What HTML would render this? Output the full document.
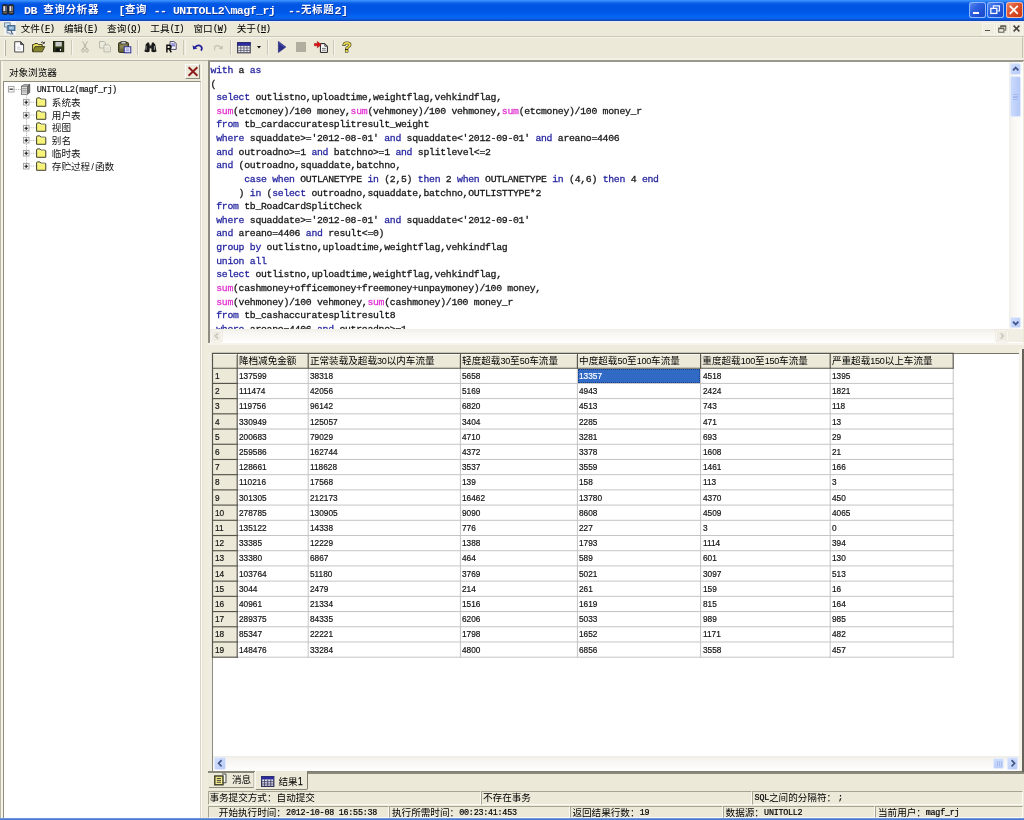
<!DOCTYPE html><html><head><meta charset="utf-8"><title>DB</title><style>*{margin:0;padding:0;box-sizing:border-box}
html,body{width:1024px;height:820px;overflow:hidden;background:#ece9d8}
body{position:relative;font-family:"Liberation Sans","Noto Sans CJK SC",sans-serif;font-size:9.6px;color:#000}
.a{position:absolute;white-space:nowrap;overflow:hidden}
.t{position:absolute;white-space:nowrap;line-height:1}
svg{position:absolute;overflow:visible}
.sql{position:absolute;white-space:pre;font-family:"Liberation Mono",monospace;font-size:9.8px;letter-spacing:-0.28px;line-height:13.6px;height:13.6px;color:#161616;left:210.6px;-webkit-text-stroke:.28px}
.k{color:#2626a0}.f{color:#e030d0}
.cell{position:absolute;white-space:nowrap;font-size:9.2px;line-height:1;color:#111;transform:scaleX(.9);transform-origin:0 0;-webkit-text-stroke:.2px}
.hd{position:absolute;white-space:nowrap;font-size:9.6px;line-height:1;color:#000}
.mn{position:absolute;white-space:nowrap;font-size:9.6px;line-height:1;color:#000}
.mn u{text-decoration:underline;text-underline-offset:1px}
.st{position:absolute;white-space:nowrap;font-size:9.6px;line-height:1;color:#000}
.m{font-family:"Liberation Mono",monospace;font-size:8.4px;letter-spacing:-0.24px;-webkit-text-stroke:.2px}
.tb{font-family:"Liberation Mono",monospace;font-weight:bold;font-size:11.6px;letter-spacing:-.56px;color:#fff;text-shadow:.6px .6px 0 #0b2f96}
.tc{font-family:"Liberation Sans","Noto Sans CJK SC",sans-serif;font-weight:bold;font-size:10.4px;letter-spacing:.8px;color:#fff;text-shadow:.6px .6px 0 #0b2f96}
.ml{font-family:"Liberation Mono",monospace;font-size:8.6px;letter-spacing:-.36px;-webkit-text-stroke:.15px}
.hd span{font-size:9.1px;letter-spacing:-.26px}
#w{position:absolute;left:0;top:0;width:1024px;height:820px;overflow:hidden;will-change:transform}
</style></head><body>
<div id="w">
<div class="a" style="left:0.00px;top:0.00px;width:1024.00px;height:20.80px;background:linear-gradient(#3d96ff 0,#2c80f6 7%,#0b5fe9 14%,#0056e3 24%,#0055e4 48%,#0059ea 62%,#0566f3 78%,#0664f0 86%,#0a55d8 93%,#153f9f 100%)"></div>
<div class="t tb" style="left:24.10px;top:4.70px;">DB</div>
<div class="t tc" style="left:43.30px;top:5.10px;">查询分析器</div>
<div class="t tb" style="left:105.70px;top:4.70px;">- [</div>
<div class="t tc" style="left:124.90px;top:5.10px;">查询</div>
<div class="t tb" style="left:153.70px;top:4.70px;">-- UNITOLL2\magf_rj&nbsp; --</div>
<div class="t tc" style="left:300.90px;top:5.10px;">无标题</div>
<div class="t tb" style="left:334.50px;top:4.70px;">2]</div>
<div class="a" style="left:0.00px;top:20.80px;width:1024.00px;height:16.40px;background:linear-gradient(#efe9d9,#ebe9d8 60%,#ece9d8)"></div>
<div class="a" style="left:0.00px;top:20.80px;width:1024.00px;height:1.20px;background:#e6ecf8"></div>
<div class="a" style="left:0.00px;top:36.30px;width:1024.00px;height:1.00px;background:#cbc8b9"></div>
<div class="mn" style="left:20.70px;top:23.90px;">文件</div>
<div class="mn ml" style="left:40.10px;top:24.60px;">(<u>F</u>)</div>
<div class="mn" style="left:63.90px;top:23.90px;">编辑</div>
<div class="mn ml" style="left:83.30px;top:24.60px;">(<u>E</u>)</div>
<div class="mn" style="left:107.10px;top:23.90px;">查询</div>
<div class="mn ml" style="left:126.50px;top:24.60px;">(<u>Q</u>)</div>
<div class="mn" style="left:150.30px;top:23.90px;">工具</div>
<div class="mn ml" style="left:169.70px;top:24.60px;">(<u>T</u>)</div>
<div class="mn" style="left:193.50px;top:23.90px;">窗口</div>
<div class="mn ml" style="left:212.90px;top:24.60px;">(<u>W</u>)</div>
<div class="mn" style="left:236.70px;top:23.90px;">关于</div>
<div class="mn ml" style="left:256.10px;top:24.60px;">(<u>H</u>)</div>
<svg style="left:1.8px;top:3.8px;width:12.2px;height:11px" viewBox="0 0 12.4 12.4" preserveAspectRatio="none"><rect x=".4" y=".6" width="5.4" height="11.2" rx="1.4" fill="#34343a" stroke="#14141c" stroke-width=".7"/><rect x="6.6" y=".6" width="5.4" height="11.2" rx="1.4" fill="#34343a" stroke="#14141c" stroke-width=".7"/><rect x="1.3" y="2.4" width="1.8" height="5.6" fill="#e0e0e0"/><rect x="7.6" y="2.4" width="1.8" height="5.6" fill="#e0e0e0"/><rect x="3.5" y="2.4" width="1.3" height="5.6" fill="#8a8a8a"/><rect x="9.8" y="2.4" width="1.3" height="5.6" fill="#8a8a8a"/><rect x="1.2" y="8.8" width="3.8" height="1.6" fill="#6a675c"/><rect x="7.4" y="8.8" width="3.8" height="1.6" fill="#6a675c"/></svg>
<div class="a" style="left:969.00px;top:1.60px;width:16.60px;height:16.80px;background:linear-gradient(135deg,#5d8cf0 0,#2f63e0 35%,#2152d3 70%,#1d47c4 100%);border:1px solid rgba(150,190,255,.95);border-radius:2.8px"></div>
<div class="a" style="left:987.40px;top:1.60px;width:16.40px;height:16.80px;background:linear-gradient(135deg,#5d8cf0 0,#2f63e0 35%,#2152d3 70%,#1d47c4 100%);border:1px solid rgba(150,190,255,.95);border-radius:2.8px"></div>
<div class="a" style="left:1005.80px;top:1.60px;width:16.80px;height:16.80px;background:linear-gradient(135deg,#e8866a 0,#dd5a35 35%,#d5431c 70%,#c63a14 100%);border:1px solid rgba(250,205,190,.85);border-radius:2.8px"></div>
<div class="a" style="left:973.20px;top:12.20px;width:6.00px;height:2.20px;background:#fdfdff"></div>
<svg style="left:990.40px;top:5.00px;width:10.6px;height:9.6px" viewBox="0 0 10.6 9.6"><path d="M3.4 3 V.9 H9.4 V6 H7.4" stroke="#f2f6ff" stroke-width="1.15" fill="none"/><rect x=".8" y="3.4" width="6" height="5" stroke="#f8faff" stroke-width="1.3" fill="none"/></svg>
<svg style="left:1009.40px;top:5.20px;width:9.6px;height:9.6px" viewBox="0 0 9.6 9.6"><path d="M.8 .8 L8.8 8.8 M8.8 .8 L.8 8.8" stroke="#fff" stroke-width="1.8" fill="none"/></svg>
<div class="a" style="left:3.60px;top:21.40px;width:12.60px;height:14.00px;background:#f4f4f4"></div>
<svg style="left:4.00px;top:22.00px;width:12px;height:13px" viewBox="0 0 12 13"><rect x=".6" y=".8" width="5.6" height="4.2" fill="#cfe0ee" stroke="#5a7a98" stroke-width=".8"/><rect x="3.8" y="3.4" width="7.2" height="5.2" fill="#5b86ad" stroke="#3a5a7a" stroke-width=".8"/><rect x="5" y="4.6" width="4.8" height="2.8" fill="#a9c8e4"/><path d="M3 5 V11 H6 M7.4 8.8 V11.6 M5.6 12 H9.4" stroke="#5a7a98" stroke-width=".8" fill="none"/><path d="M7 9 L8.6 12" stroke="#2a3a5a" stroke-width=".8"/></svg>
<div class="a" style="left:982.40px;top:22.60px;width:12.20px;height:12.00px;background:#efede0;border:.8px solid #f6f5ee"></div>
<div class="a" style="left:996.40px;top:22.60px;width:12.20px;height:12.00px;background:#efede0;border:.8px solid #f6f5ee"></div>
<div class="a" style="left:1010.60px;top:22.60px;width:12.20px;height:12.00px;background:#efede0;border:.8px solid #f6f5ee"></div>
<div class="a" style="left:985.00px;top:29.50px;width:4.80px;height:1.50px;background:#55534a"></div>
<svg style="left:998.00px;top:24.60px;width:9px;height:8.4px" viewBox="0 0 9 8.4"><path d="M2.6 2.6 V.9 H7.8 V5.2 H6" stroke="#5d5b51" stroke-width="1" fill="none"/><path d="M2.4 1.2 H8" stroke="#5d5b51" stroke-width="1.3"/><rect x=".7" y="3.2" width="5.2" height="4" stroke="#5d5b51" stroke-width="1" fill="none"/><path d="M.7 3.5 H5.9" stroke="#5d5b51" stroke-width="1.4"/></svg>
<svg style="left:1013.40px;top:25.20px;width:7px;height:7px" viewBox="0 0 7 7"><path d="M.6 .6 L6.4 6.4 M6.4 .6 L.6 6.4" stroke="#3e3d36" stroke-width="1.5" fill="none"/></svg>
<div class="a" style="left:0.00px;top:37.20px;width:1022.60px;height:22.40px;background:#ece9d8;border-top:1px solid #f6f4ea;border-right:1.2px solid #c4c1b0"></div>
<div class="a" style="left:0.00px;top:57.60px;width:1022.60px;height:2.00px;background:#f3f1e6"></div>
<div class="a" style="left:0.00px;top:59.60px;width:1024.00px;height:1.30px;background:#bcb9a9"></div>
<div class="a" style="left:4.00px;top:40.40px;width:1.60px;height:15.60px;border-left:.8px solid #fbfaf4;border-right:.9px solid #b4b1a0"></div>
<div class="a" style="left:70.70px;top:40.20px;width:1.10px;height:14.40px;background:#cbc8b8"></div>
<div class="a" style="left:71.80px;top:40.20px;width:0.90px;height:14.40px;background:#f6f5ee"></div>
<div class="a" style="left:137.00px;top:40.20px;width:1.10px;height:14.40px;background:#cbc8b8"></div>
<div class="a" style="left:138.10px;top:40.20px;width:0.90px;height:14.40px;background:#f6f5ee"></div>
<div class="a" style="left:183.40px;top:40.20px;width:1.10px;height:14.40px;background:#cbc8b8"></div>
<div class="a" style="left:184.50px;top:40.20px;width:0.90px;height:14.40px;background:#f6f5ee"></div>
<div class="a" style="left:229.80px;top:40.20px;width:1.10px;height:14.40px;background:#cbc8b8"></div>
<div class="a" style="left:230.90px;top:40.20px;width:0.90px;height:14.40px;background:#f6f5ee"></div>
<div class="a" style="left:266.60px;top:40.20px;width:1.10px;height:14.40px;background:#cbc8b8"></div>
<div class="a" style="left:267.70px;top:40.20px;width:0.90px;height:14.40px;background:#f6f5ee"></div>
<div class="a" style="left:333.20px;top:40.20px;width:1.10px;height:14.40px;background:#cbc8b8"></div>
<div class="a" style="left:334.30px;top:40.20px;width:0.90px;height:14.40px;background:#f6f5ee"></div>
<svg style="left:14.00px;top:41.20px;width:10.4px;height:11.8px" viewBox="0 0 10.4 11.8"><path d="M.7 .7 H6.6 L9.6 3.6 V11 H.7 Z" fill="#fcfcfc" stroke="#4a4a4a" stroke-width="1"/><path d="M6.6 .7 V3.6 H9.6 Z" fill="#5a5a5a" stroke="#3a3a3a" stroke-width=".8"/><path d="M3.2 6.2 H6 M3.2 8 H6.6" stroke="#b5b5c8" stroke-width=".7"/></svg>
<svg style="left:32.00px;top:41.00px;width:13.4px;height:11.6px" viewBox="0 0 13.4 11.6"><path d="M9 1.6 Q10.6 .2 12 1.8 M12.6 .8 L12.2 2.6 L10.6 2.2" stroke="#333" stroke-width=".9" fill="none"/><path d="M.6 10.8 V3.6 H2 L2.8 2.6 H5.6 L6.4 3.6 H10.2 V5.4" fill="#ece45e" stroke="#33331a" stroke-width="1"/><path d="M.6 10.8 L3 5.6 H12.8 L10.2 10.8 Z" fill="#86862c" stroke="#3b3b1e" stroke-width=".9"/></svg>
<svg style="left:53.00px;top:41.20px;width:11.2px;height:11.2px" viewBox="0 0 11.2 11.2"><rect x=".5" y=".5" width="10.2" height="10.2" fill="#2e3a16" stroke="#1c2010" stroke-width="1"/><rect x="2.4" y=".9" width="6.4" height="4.6" fill="#c9c9c9"/><rect x="2.6" y="7.2" width="6" height="3.4" fill="#111"/><rect x="6.9" y="7.8" width="1.2" height="2.2" fill="#ddd"/></svg>
<svg style="left:80.60px;top:41.20px;width:8px;height:11.8px" viewBox="0 0 8 11.8"><path d="M1.6 .4 L5.6 7.8 M6.4 .4 L2.4 7.8" stroke="#b1ae9e" stroke-width="1" fill="none"/><ellipse cx="2" cy="9.4" rx="1.2" ry="1.9" fill="none" stroke="#b1ae9e" stroke-width=".9"/><ellipse cx="6" cy="9.4" rx="1.2" ry="1.9" fill="none" stroke="#b1ae9e" stroke-width=".9"/></svg>
<svg style="left:99.00px;top:41.40px;width:12px;height:11.4px" viewBox="0 0 12 11.4"><path d="M.5 .5 H5 L6.6 2 V7 H.5 Z" fill="#ecebe0" stroke="#b5b2a2" stroke-width=".9"/><path d="M5 4 H9.6 L11.4 5.6 V10.9 H5 Z" fill="#f1f0e6" stroke="#b5b2a2" stroke-width=".9"/><path d="M6.4 7 H10 M6.4 8.8 H10" stroke="#c9c6b8" stroke-width=".7"/></svg>
<svg style="left:118.00px;top:40.80px;width:13.4px;height:12.4px" viewBox="0 0 13.4 12.4"><rect x=".6" y="1.6" width="9.8" height="9.8" rx=".8" fill="#6f6a3c" stroke="#2c2a18" stroke-width="1"/><rect x="3" y=".4" width="5" height="2.6" fill="#c9c9c9" stroke="#333" stroke-width=".7"/><rect x="2" y="3.6" width="7" height="4" fill="#8a8556"/><rect x="6.2" y="5.8" width="6.6" height="6" fill="#f4f4ff" stroke="#2a2a9a" stroke-width="1"/><path d="M7.6 8 H11.4 M7.6 9.8 H11.4" stroke="#5a5ac0" stroke-width=".7"/></svg>
<svg style="left:144.00px;top:41.80px;width:13px;height:10.6px" viewBox="0 0 13 10.6"><path d="M1.8 2.6 L3.4 .6 H5 L5.6 2.6 V9.6 Q3.2 10.8 .5 9.4 Z" fill="#1a1a1a"/><path d="M11.2 2.6 L9.6 .6 H8 L7.4 2.6 V9.6 Q9.8 10.8 12.5 9.4 Z" fill="#1a1a1a"/><rect x="5.2" y="3.4" width="2.6" height="3" fill="#1a1a1a"/><path d="M2 4 V8 M10.4 4 V8" stroke="#ddd" stroke-width=".7"/></svg>
<svg style="left:165.60px;top:41.20px;width:11px;height:11.6px" viewBox="0 0 11 11.6"><path d="M4 .6 H8 L10.2 2.4 V8.4 H4 Z" fill="#f6f6fb" stroke="#3c3c5c" stroke-width=".9"/><path d="M5.2 3 H9 M5.2 4.8 H9" stroke="#3a3ab0" stroke-width=".9"/><path d="M.9 11.4 V4.2 H3.2 Q5 4.2 5 6 Q5 7.8 3.2 7.8 H.9 M3.2 7.8 L5.3 11.4" stroke="#0c0c0c" stroke-width="1.45" fill="none"/></svg>
<svg style="left:191.60px;top:43.00px;width:11.6px;height:8.6px" viewBox="0 0 11.6 8.6"><path d="M2.6 4.6 Q6.2 1 9 3.4 Q10.8 5.4 9 7.6" stroke="#23239a" stroke-width="1.7" fill="none"/><path d="M.6 2.2 L1.2 6.6 L5.4 5.4 Z" fill="#23239a"/></svg>
<svg style="left:212.60px;top:43.00px;width:10.6px;height:8.6px" viewBox="0 0 10.6 8.6"><path d="M8 4.6 Q4.6 1.4 2 3.6 Q.6 5.4 2 7.4" stroke="#c3c0b0" stroke-width="1.3" fill="none"/><path d="M10 2.4 L9.4 6.4 L5.6 5.4 Z" fill="#c3c0b0"/></svg>
<svg style="left:237.00px;top:41.60px;width:13.8px;height:11.4px" viewBox="0 0 13.8 11.4"><rect x=".6" y=".6" width="12.6" height="10.2" fill="#eeeef4" stroke="#3a3a4a" stroke-width="1.1"/><rect x=".6" y=".6" width="12.6" height="3" fill="#2b2ba6" stroke="#23236a" stroke-width=".6"/><path d="M.6 6 H13.2 M.6 8.4 H13.2 M3.8 3.6 V10.8 M6.9 3.6 V10.8 M10 3.6 V10.8" stroke="#55556a" stroke-width=".8"/></svg>
<svg style="left:257.40px;top:46.20px;width:4px;height:2.6px" viewBox="0 0 4 2.6"><path d="M0 0 H4 L2 2.6 Z" fill="#111"/></svg>
<svg style="left:277.60px;top:41.00px;width:8.2px;height:12px" viewBox="0 0 8.2 12"><path d="M.4 .4 L7.8 6 L.4 11.6 Z" fill="#2a2f8c" stroke="#1d2170" stroke-width=".6"/><path d="M1.2 2 L6.4 6" stroke="#5a60c0" stroke-width=".8"/></svg>
<div class="a" style="left:295.80px;top:42.40px;width:9.90px;height:9.60px;background:#b1aea0"></div>
<svg style="left:313.80px;top:41.20px;width:14px;height:12px" viewBox="0 0 14 12"><path d="M6.4 2.6 H10.8 L13.4 5.2 V11.4 H6.4 Z" fill="#fafafa" stroke="#1c1c1c" stroke-width="1"/><path d="M10.8 2.6 V5.2 H13.4" fill="none" stroke="#1c1c1c" stroke-width=".8"/><path d="M8 7.4 H11.8 M8 9.2 H11.8" stroke="#555" stroke-width=".8"/><path d="M.4 2.4 H3.4 V.4 L7.2 3.6 L3.4 6.8 V4.8 H.4 Z" fill="#e01010" stroke="#8a0a0a" stroke-width=".5"/></svg>
<div class="t" style="left:342.2px;top:39.2px;font-size:15.5px;font-weight:bold;color:#e6d84a;-webkit-text-stroke:1.15px #2e2c10;paint-order:stroke fill">?</div>
<div class="a" style="left:0.00px;top:60.90px;width:208.00px;height:757.10px;background:#ece9d8"></div>
<div class="a" style="left:0.00px;top:61.00px;width:0.80px;height:757.00px;background:#bab7a4"></div>
<div class="a" style="left:0.80px;top:61.00px;width:2.20px;height:757.00px;background:#f6f4ea"></div>
<div class="a" style="left:201.20px;top:62.00px;width:1.20px;height:756.00px;background:#f8f7f0"></div>
<div class="a" style="left:204.00px;top:62.00px;width:4.00px;height:756.00px;background:#efecde"></div>
<div class="t" style="left:8.90px;top:67.90px;font-size:9.6px">对象浏览器</div>
<div class="a" style="left:184.50px;top:64.00px;width:15.40px;height:14.60px;background:#ece9d8;border-top:1px solid #fff;border-left:1px solid #fff;border-right:1.3px solid #8c8a7c;border-bottom:1.3px solid #8c8a7c"></div>
<svg class="a" style="left:186.5px;top:66px;width:12px;height:11px" viewBox="0 0 12 11"><path d="M1.6 1.2 L10.4 9.8 M10.4 1.2 L1.6 9.8" stroke="#8e1c1c" stroke-width="1.9" fill="none"/></svg>
<div class="a" style="left:3.20px;top:80.50px;width:198.00px;height:737.50px;background:#fff;border-top:1.5px solid #8f8d80;border-left:1.7px solid #8f8d80;border-right:1px solid #d9d6c8"></div>
<svg style="left:0;top:0;width:204px;height:200px" viewBox="0 0 204 200"><g stroke="#a8a8a8" stroke-width=".9" stroke-dasharray=".9 .9" fill="none"><path d="M14.4 89.5 H21"/><path d="M26.5 95.5 V166.0"/><path d="M29.6 102.25 H35.5"/><path d="M29.6 115.00 H35.5"/><path d="M29.6 127.75 H35.5"/><path d="M29.6 140.50 H35.5"/><path d="M29.6 153.25 H35.5"/><path d="M29.6 166.00 H35.5"/></g></svg>
<svg style="left:8.10px;top:86.10px;width:6.4px;height:6.4px" viewBox="0 0 6.4 6.4"><rect x=".4" y=".4" width="5.6000000000000005" height="5.6000000000000005" fill="#fff" stroke="#9c9c9c" stroke-width=".9"/><path d="M1.5 3.2 H4.9" stroke="#111" stroke-width="1.1"/></svg>
<svg style="left:21.4px;top:84.10px;width:9.6px;height:10.8px" viewBox="0 0 9.6 10.8">
<path d="M0.6 2.2 L6.4 2.2 L8.8 0.5 L3 0.5 Z" fill="#d8d8d8" stroke="#555" stroke-width=".6"/>
<path d="M6.4 2.2 L8.8 0.5 L8.8 8.6 L6.4 10.3 Z" fill="#6e6e6e" stroke="#444" stroke-width=".6"/>
<rect x=".6" y="2.2" width="5.8" height="8.1" fill="#e6e6e6" stroke="#555" stroke-width=".7"/>
<path d="M1.2 4.4 H5.8 M1.2 6.2 H5.8 M1.2 8 H5.8" stroke="#777" stroke-width=".7"/></svg>
<div class="t m" style="left:36.8px;top:85.80px;font-size:8.6px;letter-spacing:-.45px;color:#1a1a1a">UNITOLL2(magf_rj)</div>
<svg style="left:23.30px;top:99.05px;width:6.4px;height:6.4px" viewBox="0 0 6.4 6.4"><rect x=".4" y=".4" width="5.6000000000000005" height="5.6000000000000005" fill="#fff" stroke="#9c9c9c" stroke-width=".9"/><path d="M1.5 3.2 H4.9 M3.2 1.5 V4.9" stroke="#111" stroke-width="1.1"/></svg>
<svg style="left:35.6px;top:96.95px;width:10.4px;height:10px" viewBox="0 0 10.4 10">
<path d="M.6 1.9 Q.6 .9 1.6 .9 L3.9 .9 L5 2.2 L9.1 2.2 Q9.8 2.2 9.8 2.9 L9.8 9.3 L.6 9.3 Z" fill="#f7f378" stroke="#3c3c2c" stroke-width="1"/>
<path d="M1.3 2.9 H9" stroke="#fbfab0" stroke-width=".7"/></svg>
<div class="t" style="left:51.8px;top:97.75px;font-size:9.6px;color:#111">系统表</div>
<svg style="left:23.30px;top:111.80px;width:6.4px;height:6.4px" viewBox="0 0 6.4 6.4"><rect x=".4" y=".4" width="5.6000000000000005" height="5.6000000000000005" fill="#fff" stroke="#9c9c9c" stroke-width=".9"/><path d="M1.5 3.2 H4.9 M3.2 1.5 V4.9" stroke="#111" stroke-width="1.1"/></svg>
<svg style="left:35.6px;top:109.70px;width:10.4px;height:10px" viewBox="0 0 10.4 10">
<path d="M.6 1.9 Q.6 .9 1.6 .9 L3.9 .9 L5 2.2 L9.1 2.2 Q9.8 2.2 9.8 2.9 L9.8 9.3 L.6 9.3 Z" fill="#f7f378" stroke="#3c3c2c" stroke-width="1"/>
<path d="M1.3 2.9 H9" stroke="#fbfab0" stroke-width=".7"/></svg>
<div class="t" style="left:51.8px;top:110.50px;font-size:9.6px;color:#111">用户表</div>
<svg style="left:23.30px;top:124.55px;width:6.4px;height:6.4px" viewBox="0 0 6.4 6.4"><rect x=".4" y=".4" width="5.6000000000000005" height="5.6000000000000005" fill="#fff" stroke="#9c9c9c" stroke-width=".9"/><path d="M1.5 3.2 H4.9 M3.2 1.5 V4.9" stroke="#111" stroke-width="1.1"/></svg>
<svg style="left:35.6px;top:122.45px;width:10.4px;height:10px" viewBox="0 0 10.4 10">
<path d="M.6 1.9 Q.6 .9 1.6 .9 L3.9 .9 L5 2.2 L9.1 2.2 Q9.8 2.2 9.8 2.9 L9.8 9.3 L.6 9.3 Z" fill="#f7f378" stroke="#3c3c2c" stroke-width="1"/>
<path d="M1.3 2.9 H9" stroke="#fbfab0" stroke-width=".7"/></svg>
<div class="t" style="left:51.8px;top:123.25px;font-size:9.6px;color:#111">视图</div>
<svg style="left:23.30px;top:137.30px;width:6.4px;height:6.4px" viewBox="0 0 6.4 6.4"><rect x=".4" y=".4" width="5.6000000000000005" height="5.6000000000000005" fill="#fff" stroke="#9c9c9c" stroke-width=".9"/><path d="M1.5 3.2 H4.9 M3.2 1.5 V4.9" stroke="#111" stroke-width="1.1"/></svg>
<svg style="left:35.6px;top:135.20px;width:10.4px;height:10px" viewBox="0 0 10.4 10">
<path d="M.6 1.9 Q.6 .9 1.6 .9 L3.9 .9 L5 2.2 L9.1 2.2 Q9.8 2.2 9.8 2.9 L9.8 9.3 L.6 9.3 Z" fill="#f7f378" stroke="#3c3c2c" stroke-width="1"/>
<path d="M1.3 2.9 H9" stroke="#fbfab0" stroke-width=".7"/></svg>
<div class="t" style="left:51.8px;top:136.00px;font-size:9.6px;color:#111">别名</div>
<svg style="left:23.30px;top:150.05px;width:6.4px;height:6.4px" viewBox="0 0 6.4 6.4"><rect x=".4" y=".4" width="5.6000000000000005" height="5.6000000000000005" fill="#fff" stroke="#9c9c9c" stroke-width=".9"/><path d="M1.5 3.2 H4.9 M3.2 1.5 V4.9" stroke="#111" stroke-width="1.1"/></svg>
<svg style="left:35.6px;top:147.95px;width:10.4px;height:10px" viewBox="0 0 10.4 10">
<path d="M.6 1.9 Q.6 .9 1.6 .9 L3.9 .9 L5 2.2 L9.1 2.2 Q9.8 2.2 9.8 2.9 L9.8 9.3 L.6 9.3 Z" fill="#f7f378" stroke="#3c3c2c" stroke-width="1"/>
<path d="M1.3 2.9 H9" stroke="#fbfab0" stroke-width=".7"/></svg>
<div class="t" style="left:51.8px;top:148.75px;font-size:9.6px;color:#111">临时表</div>
<svg style="left:23.30px;top:162.80px;width:6.4px;height:6.4px" viewBox="0 0 6.4 6.4"><rect x=".4" y=".4" width="5.6000000000000005" height="5.6000000000000005" fill="#fff" stroke="#9c9c9c" stroke-width=".9"/><path d="M1.5 3.2 H4.9 M3.2 1.5 V4.9" stroke="#111" stroke-width="1.1"/></svg>
<svg style="left:35.6px;top:160.70px;width:10.4px;height:10px" viewBox="0 0 10.4 10">
<path d="M.6 1.9 Q.6 .9 1.6 .9 L3.9 .9 L5 2.2 L9.1 2.2 Q9.8 2.2 9.8 2.9 L9.8 9.3 L.6 9.3 Z" fill="#f7f378" stroke="#3c3c2c" stroke-width="1"/>
<path d="M1.3 2.9 H9" stroke="#fbfab0" stroke-width=".7"/></svg>
<div class="t" style="left:51.8px;top:161.50px;font-size:9.6px;color:#111">存贮过程<span style="display:inline-block;width:4.8px;text-align:center">/</span>函数</div>
<div class="a" style="left:208.00px;top:60.00px;width:816.00px;height:282.60px;background:#fff;border-top:2px solid #9a988d;border-left:2px solid #8f8d82"></div>
<div class="a" style="left:210px;top:62.2px;width:799px;height:267px">
<div class="sql" style="left:0.6px;top:1.80px"><span class="k">with</span> a <span class="k">as</span></div>
<div class="sql" style="left:0.6px;top:15.42px">(</div>
<div class="sql" style="left:0.6px;top:29.04px"> <span class="k">select</span> outlistno,uploadtime,weightflag,vehkindflag,</div>
<div class="sql" style="left:0.6px;top:42.66px"> <span class="f">sum</span>(etcmoney)/100 money,<span class="f">sum</span>(vehmoney)/100 vehmoney,<span class="f">sum</span>(etcmoney)/100 money_r</div>
<div class="sql" style="left:0.6px;top:56.28px"> <span class="k">from</span> tb_cardaccuratesplitresult_weight</div>
<div class="sql" style="left:0.6px;top:69.90px"> <span class="k">where</span> squaddate&gt;='2012-08-01' <span class="k">and</span> squaddate&lt;'2012-09-01' <span class="k">and</span> areano=4406</div>
<div class="sql" style="left:0.6px;top:83.52px"> <span class="k">and</span> outroadno&gt;=1 <span class="k">and</span> batchno&gt;=1 <span class="k">and</span> splitlevel&lt;=2</div>
<div class="sql" style="left:0.6px;top:97.14px"> <span class="k">and</span> (outroadno,squaddate,batchno,</div>
<div class="sql" style="left:0.6px;top:110.76px">      <span class="k">case</span> <span class="k">when</span> OUTLANETYPE <span class="k">in</span> (2,5) <span class="k">then</span> 2 <span class="k">when</span> OUTLANETYPE <span class="k">in</span> (4,6) <span class="k">then</span> 4 <span class="k">end</span></div>
<div class="sql" style="left:0.6px;top:124.38px">     ) <span class="k">in</span> (<span class="k">select</span> outroadno,squaddate,batchno,OUTLISTTYPE*2</div>
<div class="sql" style="left:0.6px;top:138.00px"> <span class="k">from</span> tb_RoadCardSplitCheck</div>
<div class="sql" style="left:0.6px;top:151.62px"> <span class="k">where</span> squaddate&gt;='2012-08-01' <span class="k">and</span> squaddate&lt;'2012-09-01'</div>
<div class="sql" style="left:0.6px;top:165.24px"> <span class="k">and</span> areano=4406 <span class="k">and</span> result&lt;=0)</div>
<div class="sql" style="left:0.6px;top:178.86px"> <span class="k">group</span> <span class="k">by</span> outlistno,uploadtime,weightflag,vehkindflag</div>
<div class="sql" style="left:0.6px;top:192.48px"> <span class="k">union</span> <span class="k">all</span></div>
<div class="sql" style="left:0.6px;top:206.10px"> <span class="k">select</span> outlistno,uploadtime,weightflag,vehkindflag,</div>
<div class="sql" style="left:0.6px;top:219.72px"> <span class="f">sum</span>(cashmoney+officemoney+freemoney+unpaymoney)/100 money,</div>
<div class="sql" style="left:0.6px;top:233.34px"> <span class="f">sum</span>(vehmoney)/100 vehmoney,<span class="f">sum</span>(cashmoney)/100 money_r</div>
<div class="sql" style="left:0.6px;top:246.96px"> <span class="k">from</span> tb_cashaccuratesplitresult8</div>
<div class="sql" style="left:0.6px;top:260.58px"> <span class="k">where</span> areano=4406 <span class="k">and</span> outroadno&gt;=1</div>
</div>
<div class="a" style="left:208.00px;top:342.60px;width:816.00px;height:10.00px;background:#eeebdc"></div>
<div class="a" style="left:208.00px;top:342.80px;width:816.00px;height:2.00px;background:#f6f4ea"></div>
<div class="a" style="left:208.00px;top:352.60px;width:3.80px;height:420.00px;background:#efede1"></div>
<div class="a" style="left:211.80px;top:352.60px;width:807.60px;height:419.80px;background:#fff;border-top:1.4px solid #77756a;border-left:1.4px solid #8d8b7e"></div>
<div class="a" style="left:1019.40px;top:349.00px;width:3.00px;height:423.60px;background:#f5f3ea"></div>
<div class="a" style="left:1022.40px;top:349.00px;width:1.60px;height:423.60px;background:#66645a"></div>
<div class="a" style="left:211.80px;top:771.00px;width:810.60px;height:1.60px;background:#807e72"></div>
<div class="a" style="left:212.30px;top:353.40px;width:740.90px;height:14.80px;background:#ece9d8"></div>
<div class="a" style="left:212.30px;top:368.20px;width:24.90px;height:288.99px;background:#ece9d8"></div>
<svg style="left:0;top:0;width:1024px;height:820px" viewBox="0 0 1024 820" fill="none"><path d="M237.20 383.41H953.70" stroke="#c4c4c4" stroke-width="1.0"/><path d="M237.20 398.62H953.70" stroke="#c4c4c4" stroke-width="1.0"/><path d="M237.20 413.83H953.70" stroke="#c4c4c4" stroke-width="1.0"/><path d="M237.20 429.04H953.70" stroke="#c4c4c4" stroke-width="1.0"/><path d="M237.20 444.25H953.70" stroke="#c4c4c4" stroke-width="1.0"/><path d="M237.20 459.46H953.70" stroke="#c4c4c4" stroke-width="1.0"/><path d="M237.20 474.67H953.70" stroke="#c4c4c4" stroke-width="1.0"/><path d="M237.20 489.88H953.70" stroke="#c4c4c4" stroke-width="1.0"/><path d="M237.20 505.09H953.70" stroke="#c4c4c4" stroke-width="1.0"/><path d="M237.20 520.30H953.70" stroke="#c4c4c4" stroke-width="1.0"/><path d="M237.20 535.51H953.70" stroke="#c4c4c4" stroke-width="1.0"/><path d="M237.20 550.72H953.70" stroke="#c4c4c4" stroke-width="1.0"/><path d="M237.20 565.93H953.70" stroke="#c4c4c4" stroke-width="1.0"/><path d="M237.20 581.14H953.70" stroke="#c4c4c4" stroke-width="1.0"/><path d="M237.20 596.35H953.70" stroke="#c4c4c4" stroke-width="1.0"/><path d="M237.20 611.56H953.70" stroke="#c4c4c4" stroke-width="1.0"/><path d="M237.20 626.77H953.70" stroke="#c4c4c4" stroke-width="1.0"/><path d="M237.20 641.98H953.70" stroke="#c4c4c4" stroke-width="1.0"/><path d="M237.20 657.19H953.70" stroke="#c4c4c4" stroke-width="1.0"/><path d="M308.20 368.20V657.69" stroke="#c4c4c4" stroke-width="1.0"/><path d="M460.40 368.20V657.69" stroke="#c4c4c4" stroke-width="1.0"/><path d="M577.40 368.20V657.69" stroke="#c4c4c4" stroke-width="1.0"/><path d="M700.60 368.20V657.69" stroke="#c4c4c4" stroke-width="1.0"/><path d="M830.20 368.20V657.69" stroke="#c4c4c4" stroke-width="1.0"/><path d="M953.20 368.20V657.69" stroke="#c4c4c4" stroke-width="1.0"/><path d="M211.90 353.30H953.80" stroke="#55534a" stroke-width="1.15"/><path d="M212.50 353.00V657.79" stroke="#55534a" stroke-width="1.15"/><path d="M212.30 368.20H953.80" stroke="#55534a" stroke-width="1.15"/><path d="M237.20 353.60V368.20" stroke="#55534a" stroke-width="1.15"/><path d="M308.20 353.60V368.20" stroke="#55534a" stroke-width="1.15"/><path d="M460.40 353.60V368.20" stroke="#55534a" stroke-width="1.15"/><path d="M577.40 353.60V368.20" stroke="#55534a" stroke-width="1.15"/><path d="M700.60 353.60V368.20" stroke="#55534a" stroke-width="1.15"/><path d="M830.20 353.60V368.20" stroke="#55534a" stroke-width="1.15"/><path d="M953.20 353.60V368.20" stroke="#55534a" stroke-width="1.15"/><path d="M212.30 383.41H237.80" stroke="#55534a" stroke-width="1.15"/><path d="M212.30 398.62H237.80" stroke="#55534a" stroke-width="1.15"/><path d="M212.30 413.83H237.80" stroke="#55534a" stroke-width="1.15"/><path d="M212.30 429.04H237.80" stroke="#55534a" stroke-width="1.15"/><path d="M212.30 444.25H237.80" stroke="#55534a" stroke-width="1.15"/><path d="M212.30 459.46H237.80" stroke="#55534a" stroke-width="1.15"/><path d="M212.30 474.67H237.80" stroke="#55534a" stroke-width="1.15"/><path d="M212.30 489.88H237.80" stroke="#55534a" stroke-width="1.15"/><path d="M212.30 505.09H237.80" stroke="#55534a" stroke-width="1.15"/><path d="M212.30 520.30H237.80" stroke="#55534a" stroke-width="1.15"/><path d="M212.30 535.51H237.80" stroke="#55534a" stroke-width="1.15"/><path d="M212.30 550.72H237.80" stroke="#55534a" stroke-width="1.15"/><path d="M212.30 565.93H237.80" stroke="#55534a" stroke-width="1.15"/><path d="M212.30 581.14H237.80" stroke="#55534a" stroke-width="1.15"/><path d="M212.30 596.35H237.80" stroke="#55534a" stroke-width="1.15"/><path d="M212.30 611.56H237.80" stroke="#55534a" stroke-width="1.15"/><path d="M212.30 626.77H237.80" stroke="#55534a" stroke-width="1.15"/><path d="M212.30 641.98H237.80" stroke="#55534a" stroke-width="1.15"/><path d="M212.30 657.19H237.80" stroke="#55534a" stroke-width="1.15"/><path d="M237.20 368.20V657.79" stroke="#55534a" stroke-width="1.15"/></svg>
<div class="a" style="left:213.00px;top:354.10px;width:23.50px;height:0.80px;background:#f9f8f2"></div>
<div class="a" style="left:237.90px;top:354.10px;width:69.60px;height:0.80px;background:#f9f8f2"></div>
<div class="a" style="left:308.90px;top:354.10px;width:150.80px;height:0.80px;background:#f9f8f2"></div>
<div class="a" style="left:461.10px;top:354.10px;width:115.60px;height:0.80px;background:#f9f8f2"></div>
<div class="a" style="left:578.10px;top:354.10px;width:121.80px;height:0.80px;background:#f9f8f2"></div>
<div class="a" style="left:701.30px;top:354.10px;width:128.20px;height:0.80px;background:#f9f8f2"></div>
<div class="a" style="left:830.90px;top:354.10px;width:121.60px;height:0.80px;background:#f9f8f2"></div>
<div class="a" style="left:577.80px;top:368.70px;width:122.60px;height:14.41px;background:#316ac5;outline:1px dotted #1a3f86;outline-offset:-1px"></div>
<div class="hd" style="left:238.90px;top:355.90px">降档减免金额</div>
<div class="hd" style="left:309.90px;top:355.90px">正常装载及超载<span>30</span>以内车流量</div>
<div class="hd" style="left:462.10px;top:355.90px">轻度超载<span>30</span>至<span>50</span>车流量</div>
<div class="hd" style="left:579.10px;top:355.90px">中度超载<span>50</span>至<span>100</span>车流量</div>
<div class="hd" style="left:702.30px;top:355.90px">重度超载<span>100</span>至<span>150</span>车流量</div>
<div class="hd" style="left:831.90px;top:355.90px">严重超载<span>150</span>以上车流量</div>
<div class="cell" style="left:214.70px;top:371.90px">1</div>
<div class="cell" style="left:239.10px;top:371.90px;">137599</div>
<div class="cell" style="left:310.10px;top:371.90px;">38318</div>
<div class="cell" style="left:462.30px;top:371.90px;">5658</div>
<div class="cell" style="left:579.30px;top:371.90px;color:#fff;">13357</div>
<div class="cell" style="left:702.50px;top:371.90px;">4518</div>
<div class="cell" style="left:832.10px;top:371.90px;">1395</div>
<div class="cell" style="left:214.70px;top:387.11px">2</div>
<div class="cell" style="left:239.10px;top:387.11px;">111474</div>
<div class="cell" style="left:310.10px;top:387.11px;">42056</div>
<div class="cell" style="left:462.30px;top:387.11px;">5169</div>
<div class="cell" style="left:579.30px;top:387.11px;">4943</div>
<div class="cell" style="left:702.50px;top:387.11px;">2424</div>
<div class="cell" style="left:832.10px;top:387.11px;">1821</div>
<div class="cell" style="left:214.70px;top:402.32px">3</div>
<div class="cell" style="left:239.10px;top:402.32px;">119756</div>
<div class="cell" style="left:310.10px;top:402.32px;">96142</div>
<div class="cell" style="left:462.30px;top:402.32px;">6820</div>
<div class="cell" style="left:579.30px;top:402.32px;">4513</div>
<div class="cell" style="left:702.50px;top:402.32px;">743</div>
<div class="cell" style="left:832.10px;top:402.32px;">118</div>
<div class="cell" style="left:214.70px;top:417.53px">4</div>
<div class="cell" style="left:239.10px;top:417.53px;">330949</div>
<div class="cell" style="left:310.10px;top:417.53px;">125057</div>
<div class="cell" style="left:462.30px;top:417.53px;">3404</div>
<div class="cell" style="left:579.30px;top:417.53px;">2285</div>
<div class="cell" style="left:702.50px;top:417.53px;">471</div>
<div class="cell" style="left:832.10px;top:417.53px;">13</div>
<div class="cell" style="left:214.70px;top:432.74px">5</div>
<div class="cell" style="left:239.10px;top:432.74px;">200683</div>
<div class="cell" style="left:310.10px;top:432.74px;">79029</div>
<div class="cell" style="left:462.30px;top:432.74px;">4710</div>
<div class="cell" style="left:579.30px;top:432.74px;">3281</div>
<div class="cell" style="left:702.50px;top:432.74px;">693</div>
<div class="cell" style="left:832.10px;top:432.74px;">29</div>
<div class="cell" style="left:214.70px;top:447.95px">6</div>
<div class="cell" style="left:239.10px;top:447.95px;">259586</div>
<div class="cell" style="left:310.10px;top:447.95px;">162744</div>
<div class="cell" style="left:462.30px;top:447.95px;">4372</div>
<div class="cell" style="left:579.30px;top:447.95px;">3378</div>
<div class="cell" style="left:702.50px;top:447.95px;">1608</div>
<div class="cell" style="left:832.10px;top:447.95px;">21</div>
<div class="cell" style="left:214.70px;top:463.16px">7</div>
<div class="cell" style="left:239.10px;top:463.16px;">128661</div>
<div class="cell" style="left:310.10px;top:463.16px;">118628</div>
<div class="cell" style="left:462.30px;top:463.16px;">3537</div>
<div class="cell" style="left:579.30px;top:463.16px;">3559</div>
<div class="cell" style="left:702.50px;top:463.16px;">1461</div>
<div class="cell" style="left:832.10px;top:463.16px;">166</div>
<div class="cell" style="left:214.70px;top:478.37px">8</div>
<div class="cell" style="left:239.10px;top:478.37px;">110216</div>
<div class="cell" style="left:310.10px;top:478.37px;">17568</div>
<div class="cell" style="left:462.30px;top:478.37px;">139</div>
<div class="cell" style="left:579.30px;top:478.37px;">158</div>
<div class="cell" style="left:702.50px;top:478.37px;">113</div>
<div class="cell" style="left:832.10px;top:478.37px;">3</div>
<div class="cell" style="left:214.70px;top:493.58px">9</div>
<div class="cell" style="left:239.10px;top:493.58px;">301305</div>
<div class="cell" style="left:310.10px;top:493.58px;">212173</div>
<div class="cell" style="left:462.30px;top:493.58px;">16462</div>
<div class="cell" style="left:579.30px;top:493.58px;">13780</div>
<div class="cell" style="left:702.50px;top:493.58px;">4370</div>
<div class="cell" style="left:832.10px;top:493.58px;">450</div>
<div class="cell" style="left:214.70px;top:508.79px">10</div>
<div class="cell" style="left:239.10px;top:508.79px;">278785</div>
<div class="cell" style="left:310.10px;top:508.79px;">130905</div>
<div class="cell" style="left:462.30px;top:508.79px;">9090</div>
<div class="cell" style="left:579.30px;top:508.79px;">8608</div>
<div class="cell" style="left:702.50px;top:508.79px;">4509</div>
<div class="cell" style="left:832.10px;top:508.79px;">4065</div>
<div class="cell" style="left:214.70px;top:524.00px">11</div>
<div class="cell" style="left:239.10px;top:524.00px;">135122</div>
<div class="cell" style="left:310.10px;top:524.00px;">14338</div>
<div class="cell" style="left:462.30px;top:524.00px;">776</div>
<div class="cell" style="left:579.30px;top:524.00px;">227</div>
<div class="cell" style="left:702.50px;top:524.00px;">3</div>
<div class="cell" style="left:832.10px;top:524.00px;">0</div>
<div class="cell" style="left:214.70px;top:539.21px">12</div>
<div class="cell" style="left:239.10px;top:539.21px;">33385</div>
<div class="cell" style="left:310.10px;top:539.21px;">12229</div>
<div class="cell" style="left:462.30px;top:539.21px;">1388</div>
<div class="cell" style="left:579.30px;top:539.21px;">1793</div>
<div class="cell" style="left:702.50px;top:539.21px;">1114</div>
<div class="cell" style="left:832.10px;top:539.21px;">394</div>
<div class="cell" style="left:214.70px;top:554.42px">13</div>
<div class="cell" style="left:239.10px;top:554.42px;">33380</div>
<div class="cell" style="left:310.10px;top:554.42px;">6867</div>
<div class="cell" style="left:462.30px;top:554.42px;">464</div>
<div class="cell" style="left:579.30px;top:554.42px;">589</div>
<div class="cell" style="left:702.50px;top:554.42px;">601</div>
<div class="cell" style="left:832.10px;top:554.42px;">130</div>
<div class="cell" style="left:214.70px;top:569.63px">14</div>
<div class="cell" style="left:239.10px;top:569.63px;">103764</div>
<div class="cell" style="left:310.10px;top:569.63px;">51180</div>
<div class="cell" style="left:462.30px;top:569.63px;">3769</div>
<div class="cell" style="left:579.30px;top:569.63px;">5021</div>
<div class="cell" style="left:702.50px;top:569.63px;">3097</div>
<div class="cell" style="left:832.10px;top:569.63px;">513</div>
<div class="cell" style="left:214.70px;top:584.84px">15</div>
<div class="cell" style="left:239.10px;top:584.84px;">3044</div>
<div class="cell" style="left:310.10px;top:584.84px;">2479</div>
<div class="cell" style="left:462.30px;top:584.84px;">214</div>
<div class="cell" style="left:579.30px;top:584.84px;">261</div>
<div class="cell" style="left:702.50px;top:584.84px;">159</div>
<div class="cell" style="left:832.10px;top:584.84px;">16</div>
<div class="cell" style="left:214.70px;top:600.05px">16</div>
<div class="cell" style="left:239.10px;top:600.05px;">40961</div>
<div class="cell" style="left:310.10px;top:600.05px;">21334</div>
<div class="cell" style="left:462.30px;top:600.05px;">1516</div>
<div class="cell" style="left:579.30px;top:600.05px;">1619</div>
<div class="cell" style="left:702.50px;top:600.05px;">815</div>
<div class="cell" style="left:832.10px;top:600.05px;">164</div>
<div class="cell" style="left:214.70px;top:615.26px">17</div>
<div class="cell" style="left:239.10px;top:615.26px;">289375</div>
<div class="cell" style="left:310.10px;top:615.26px;">84335</div>
<div class="cell" style="left:462.30px;top:615.26px;">6206</div>
<div class="cell" style="left:579.30px;top:615.26px;">5033</div>
<div class="cell" style="left:702.50px;top:615.26px;">989</div>
<div class="cell" style="left:832.10px;top:615.26px;">985</div>
<div class="cell" style="left:214.70px;top:630.47px">18</div>
<div class="cell" style="left:239.10px;top:630.47px;">85347</div>
<div class="cell" style="left:310.10px;top:630.47px;">22221</div>
<div class="cell" style="left:462.30px;top:630.47px;">1798</div>
<div class="cell" style="left:579.30px;top:630.47px;">1652</div>
<div class="cell" style="left:702.50px;top:630.47px;">1171</div>
<div class="cell" style="left:832.10px;top:630.47px;">482</div>
<div class="cell" style="left:214.70px;top:645.68px">19</div>
<div class="cell" style="left:239.10px;top:645.68px;">148476</div>
<div class="cell" style="left:310.10px;top:645.68px;">33284</div>
<div class="cell" style="left:462.30px;top:645.68px;">4800</div>
<div class="cell" style="left:579.30px;top:645.68px;">6856</div>
<div class="cell" style="left:702.50px;top:645.68px;">3558</div>
<div class="cell" style="left:832.10px;top:645.68px;">457</div>
<div class="a" style="left:213.20px;top:756.40px;width:806.20px;height:14.60px;background:linear-gradient(#eeede6 0,#f7f6f2 35%,#fefefd 100%)"></div>
<div class="a" style="left:213.80px;top:757.20px;width:12.60px;height:12.60px;background:linear-gradient(135deg,#d3e0fd,#b9ccf8);border-radius:2px;border:.8px solid #dfe8fd"></div>
<svg style="left:213.8px;top:757.2px;width:12.6px;height:12.6px" viewBox="0 0 12.6 12.6"><path d="M7.6 3.2 L4.6 6.3 L7.6 9.4" stroke="#44598c" stroke-width="1.7" fill="none"/></svg>
<div class="a" style="left:1006.60px;top:757.20px;width:11.60px;height:12.60px;background:linear-gradient(135deg,#d3e0fd,#b9ccf8);border-radius:2px;border:.8px solid #dfe8fd"></div>
<svg style="left:1006.6px;top:757.2px;width:11.6px;height:12.6px" viewBox="0 0 11.6 12.6"><path d="M4.6 3.2 L7.6 6.3 L4.6 9.4" stroke="#44598c" stroke-width="1.7" fill="none"/></svg>
<div class="a" style="left:993.40px;top:757.60px;width:11.00px;height:11.60px;background:linear-gradient(#cddcfd,#bccff9);border-radius:2px;border:.8px solid #e3ebfd"></div>
<div class="a" style="left:997.00px;top:760.60px;width:0.90px;height:5.40px;background:#a9bdf0"></div>
<div class="a" style="left:998.80px;top:760.60px;width:0.90px;height:5.40px;background:#a9bdf0"></div>
<div class="a" style="left:1000.60px;top:760.60px;width:0.90px;height:5.40px;background:#a9bdf0"></div>
<div class="a" style="left:1009.00px;top:62.20px;width:13.00px;height:267.00px;background:linear-gradient(90deg,#f0efe8 0,#f8f7f3 30%,#fdfdfb 100%)"></div>
<div class="a" style="left:1010.00px;top:63.20px;width:11.40px;height:11.80px;background:linear-gradient(135deg,#d0defd,#b7cbf8);border-radius:2px;border:.8px solid #e2eafd"></div>
<svg style="left:1010px;top:63.2px;width:11.4px;height:11.8px" viewBox="0 0 11.4 11.8"><path d="M3 7.4 L5.7 4.6 L8.4 7.4" stroke="#43578a" stroke-width="1.8" fill="none"/></svg>
<div class="a" style="left:1010.00px;top:316.60px;width:11.40px;height:11.80px;background:linear-gradient(135deg,#d0defd,#b7cbf8);border-radius:2px;border:.8px solid #e2eafd"></div>
<svg style="left:1010px;top:316.6px;width:11.4px;height:11.8px" viewBox="0 0 11.4 11.8"><path d="M3 4.6 L5.7 7.4 L8.4 4.6" stroke="#43578a" stroke-width="1.8" fill="none"/></svg>
<div class="a" style="left:1010.00px;top:75.60px;width:11.40px;height:41.20px;background:linear-gradient(90deg,#cbdafc,#bdd0fa 60%,#b4c8f6);border-radius:2px;border:.8px solid #e2eafd"></div>
<div class="a" style="left:1013.00px;top:94.00px;width:5.40px;height:0.80px;background:#a4b9ee"></div>
<div class="a" style="left:1013.00px;top:95.60px;width:5.40px;height:0.80px;background:#a4b9ee"></div>
<div class="a" style="left:1013.00px;top:97.20px;width:5.40px;height:0.80px;background:#a4b9ee"></div>
<div class="a" style="left:1013.00px;top:98.80px;width:5.40px;height:0.80px;background:#a4b9ee"></div>
<div class="a" style="left:210.00px;top:329.30px;width:799.00px;height:13.20px;background:linear-gradient(#efeee7 0,#f8f7f3 35%,#fefefd 100%)"></div>
<div class="a" style="left:1009.00px;top:329.30px;width:13.80px;height:13.20px;background:#f1efe3"></div>
<div class="a" style="left:1022.80px;top:60.60px;width:1.20px;height:282.00px;background:#ece9d8"></div>
<div class="a" style="left:210.80px;top:330.20px;width:11.60px;height:11.60px;background:#efede3;border:.8px solid #f8f7f1;border-radius:2px;box-shadow:0 0 0 .5px #e3e0d2"></div>
<svg style="left:210.8px;top:330.2px;width:11.6px;height:11.6px" viewBox="0 0 11.6 11.6"><path d="M7 3.4 L4.2 6 L7 8.6" stroke="#c9c7ba" stroke-width="1.6" fill="none"/></svg>
<div class="a" style="left:996.20px;top:330.20px;width:11.60px;height:11.60px;background:#efede3;border:.8px solid #f8f7f1;border-radius:2px;box-shadow:0 0 0 .5px #e3e0d2"></div>
<svg style="left:996.2px;top:330.2px;width:11.6px;height:11.6px" viewBox="0 0 11.6 11.6"><path d="M4.6 3.4 L7.4 6 L4.6 8.6" stroke="#c9c7ba" stroke-width="1.6" fill="none"/></svg>
<div class="a" style="left:208.00px;top:772.40px;width:816.00px;height:18.60px;background:#ece9d8"></div>
<div class="a" style="left:208.20px;top:771.20px;width:46.00px;height:1.50px;background:#8a887a"></div>
<div class="a" style="left:209.00px;top:772.70px;width:45.00px;height:15.20px;background:#ece9d8;border-bottom:1.3px solid #8f8d80;border-right:1px solid #c9c6b5"></div>
<div class="a" style="left:254.60px;top:771.00px;width:53.40px;height:18.60px;background:#ece9d8;border-right:1.5px solid #7d7b6e;border-bottom:1.5px solid #858377;border-left:1px solid #f8f7f0;border-bottom-right-radius:2px"></div>
<div class="a" style="left:307.60px;top:772.20px;width:716.00px;height:1.40px;background:#8a887a"></div>
<svg style="left:214px;top:773.2px;width:13px;height:12.4px" viewBox="0 0 13 12.4">
<path d="M8 1 H12 V9.8 H9" fill="#f4f4f4" stroke="#4a4a4a" stroke-width="1"/>
<rect x=".8" y="3" width="8.2" height="8.8" fill="#f3ec8c" stroke="#3a3a22" stroke-width="1.4"/>
<path d="M2.8 5.5 H7 M2.8 7.4 H7 M2.8 9.3 H7" stroke="#333" stroke-width=".9"/></svg>
<svg style="left:261px;top:776.4px;width:13.4px;height:11px" viewBox="0 0 13.4 11">
<rect x=".6" y=".6" width="12.2" height="9.8" fill="#e4e4ef" stroke="#30305a" stroke-width="1.2"/>
<rect x=".6" y=".6" width="12.2" height="2.8" fill="#2a2a9c"/>
<path d="M.6 5.7 H12.8 M.6 8 H12.8 M3.6 3.4 V10.4 M6.7 3.4 V10.4 M9.8 3.4 V10.4" stroke="#3a3a62" stroke-width=".85"/></svg>
<div class="st" style="left:232px;top:774.8px">消息</div>
<div class="st" style="left:278.4px;top:776.6px">结果</div>
<div class="st" style="left:297.8px;top:776.2px;font-size:10.6px;transform:scaleX(.8);transform-origin:0 0;-webkit-text-stroke:.25px">1</div>
<div class="a" style="left:208.00px;top:791.20px;width:272.60px;height:13.40px;background:#ece9d8;border-top:1px solid #a7a491;border-left:1px solid #a7a491;border-right:1px solid #fbfaf5;border-bottom:1px solid #fbfaf5"></div>
<div class="a" style="left:480.60px;top:791.20px;width:271.00px;height:13.40px;background:#ece9d8;border-top:1px solid #a7a491;border-left:1px solid #a7a491;border-right:1px solid #fbfaf5;border-bottom:1px solid #fbfaf5"></div>
<div class="a" style="left:751.60px;top:791.20px;width:271.20px;height:13.40px;background:#ece9d8;border-top:1px solid #a7a491;border-left:1px solid #a7a491;border-right:1px solid #fbfaf5;border-bottom:1px solid #fbfaf5"></div>
<div class="a" style="left:208.00px;top:805.80px;width:181.00px;height:12.20px;background:#ece9d8;border-top:1px solid #a7a491;border-left:1px solid #a7a491;border-right:1px solid #fbfaf5;border-bottom:1px solid #fbfaf5"></div>
<div class="a" style="left:389.00px;top:805.80px;width:181.00px;height:12.20px;background:#ece9d8;border-top:1px solid #a7a491;border-left:1px solid #a7a491;border-right:1px solid #fbfaf5;border-bottom:1px solid #fbfaf5"></div>
<div class="a" style="left:570.00px;top:805.80px;width:153.00px;height:12.20px;background:#ece9d8;border-top:1px solid #a7a491;border-left:1px solid #a7a491;border-right:1px solid #fbfaf5;border-bottom:1px solid #fbfaf5"></div>
<div class="a" style="left:723.00px;top:805.80px;width:151.60px;height:12.20px;background:#ece9d8;border-top:1px solid #a7a491;border-left:1px solid #a7a491;border-right:1px solid #fbfaf5;border-bottom:1px solid #fbfaf5"></div>
<div class="a" style="left:874.60px;top:805.80px;width:148.20px;height:12.20px;background:#ece9d8;border-top:1px solid #a7a491;border-left:1px solid #a7a491;border-right:1px solid #fbfaf5;border-bottom:1px solid #fbfaf5"></div>
<div class="st" style="left:209.4px;top:792.9px">事务提交方式：自动提交</div>
<div class="st" style="left:483px;top:792.9px">不存在事务</div>
<div class="st m" style="left:754.6px;top:793.8px">SQL</div>
<div class="st" style="left:769px;top:792.9px">之间的分隔符：</div>
<div class="st m" style="left:838px;top:793.8px">;</div>
<div class="st" style="left:218.8px;top:807.6px">开始执行时间：</div>
<div class="st m" style="left:286.1px;top:808.5px">2012-10-08 16:55:38</div>
<div class="st" style="left:392px;top:807.6px">执行所需时间：</div>
<div class="st m" style="left:459.3px;top:808.5px">00:23:41:453</div>
<div class="st" style="left:572.4px;top:807.6px">返回结果行数：</div>
<div class="st m" style="left:639.7px;top:808.5px">19</div>
<div class="st" style="left:725.6px;top:807.6px">数据源：</div>
<div class="st m" style="left:764.1px;top:808.5px">UNITOLL2</div>
<div class="st" style="left:878px;top:807.6px">当前用户：</div>
<div class="st m" style="left:925.8px;top:808.5px">magf_rj</div>
<div class="a" style="left:0.00px;top:817.50px;width:1024.00px;height:2.50px;background:linear-gradient(#9db9e8 0,#5988d6 35%,#3f74cb 100%)"></div>
</div></body></html>
